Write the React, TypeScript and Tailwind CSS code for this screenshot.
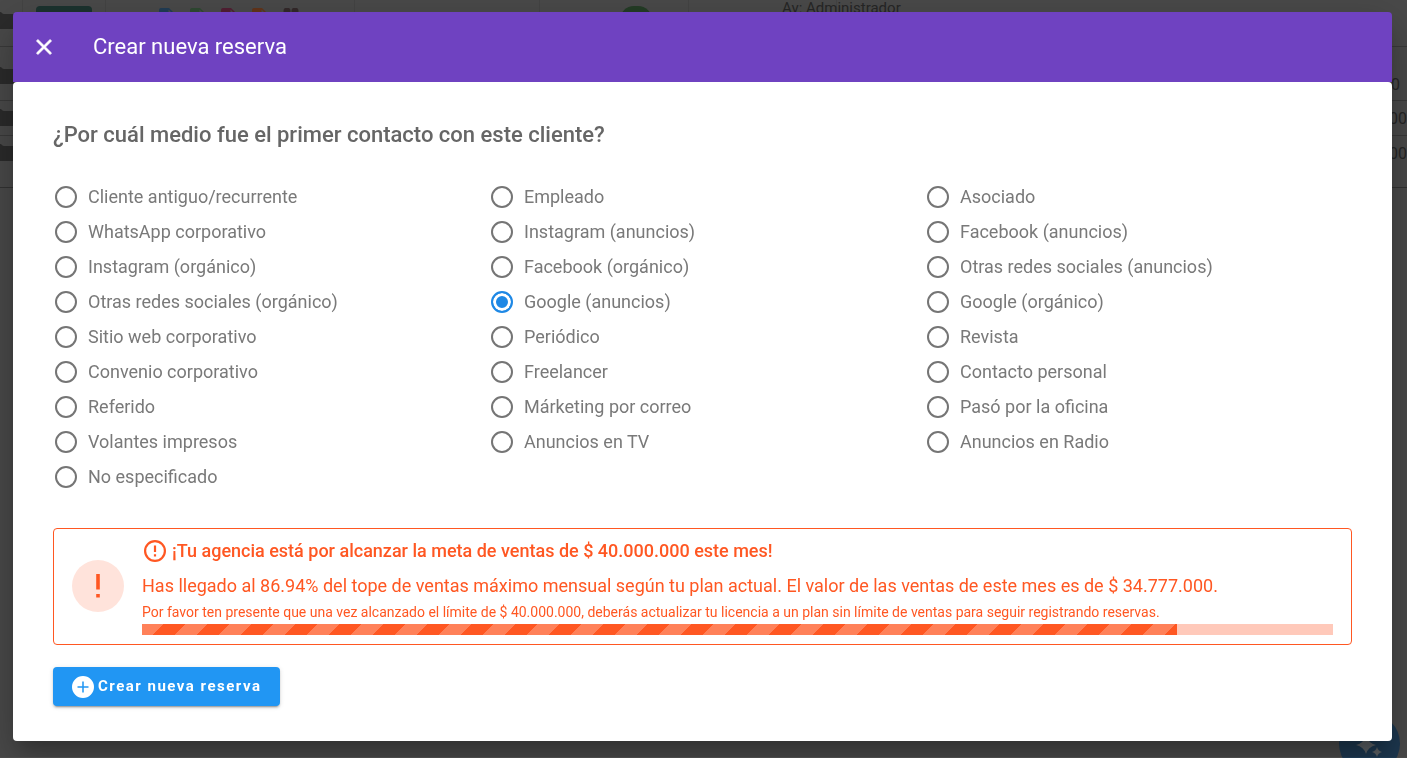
import React, { useState } from 'react';

const contactOptions = [
    'Cliente antiguo/recurrente',
    'Empleado',
    'Asociado',
    'WhatsApp corporativo',
    'Instagram (anuncios)',
    'Facebook (anuncios)',
    'Instagram (orgánico)',
    'Facebook (orgánico)',
    'Otras redes sociales (anuncios)',
    'Otras redes sociales (orgánico)',
    'Google (anuncios)',
    'Google (orgánico)',
    'Sitio web corporativo',
    'Periódico',
    'Revista',
    'Convenio corporativo',
    'Freelancer',
    'Contacto personal',
    'Referido',
    'Márketing por correo',
    'Pasó por la oficina',
    'Volantes impresos',
    'Anuncios en TV',
    'Anuncios en Radio',
    'No especificado'
];

const salesPercent = 86.94;

function FileIcon({ className }: { className: string }) {
    return (
        <svg viewBox="0 0 16 20" className={`w-4 h-5 ${className}`} fill="currentColor" aria-hidden="true">
            <path d="M2 0h8l6 6v12a2 2 0 0 1-2 2H2a2 2 0 0 1-2-2V2a2 2 0 0 1 2-2z" />
            <path d="M9.500 1.500v5h5z" fill="#4a4a4a" />
        </svg>
    );
}

function SideTag() {
    return (
        <svg viewBox="0 0 16 17" className="w-4 h-[17px] shrink-0" fill="#2b2b2b" aria-hidden="true">
            <path d="M0 0c2 0 2 2 4 2h12v15H0z" />
        </svg>
    );
}

function BookingsPage() {
    return (
        <div className="fixed inset-0 overflow-hidden bg-[#4a4a4a] text-[#262626]" aria-hidden="true">
            <div className="flex h-[47px] border-b border-[#3a3a3a]">
                <div className="w-[23px] border-r border-[#444444] pt-3"><SideTag /></div>
                <div className="w-[83px] border-r border-[#444444] pt-[6px] pl-[13px]">
                    <div className="w-14 h-6 rounded-sm bg-[#1c332f]"></div>
                </div>
                <div className="w-[249px] border-r border-[#444444] flex gap-[15px] pt-2 pl-[53px]">
                    <FileIcon className="text-[#213d55]" />
                    <FileIcon className="text-[#2f4a32]" />
                    <FileIcon className="text-[#521f33]" />
                    <FileIcon className="text-[#63351a]" />
                    <svg viewBox="0 0 16 20" className="w-4 h-5" fill="#33292a" aria-hidden="true">
                        <circle cx="4" cy="3" r="3.500" />
                        <circle cx="12" cy="3" r="3.500" />
                    </svg>
                </div>
                <div className="w-[185px] border-r border-[#444444]"></div>
                <div className="w-[149px] border-r border-[#444444] pt-[6px] pl-20">
                    <div className="w-8 h-7 rounded-full bg-[#243d26]"></div>
                </div>
                <div className="w-[148px] border-r border-[#444444] pl-[93px] text-[15px] leading-4 whitespace-nowrap">
                    Av: Administrador
                </div>
            </div>
            <div className="flex justify-between h-[54px] border-b border-[#3a3a3a] pt-5">
                <SideTag />
                <span className="pt-2 pr-[7px] text-base leading-5">0</span>
            </div>
            <div className="flex justify-between h-[35px] border-b border-[#3a3a3a] pt-2">
                <SideTag />
                <span className="text-base leading-5">00</span>
            </div>
            <div className="flex justify-between h-[52px] border-b border-[#333333] pt-2">
                <SideTag />
                <span className="text-base leading-5">00</span>
            </div>
            <div className="absolute right-[7px] -bottom-4 w-[61px] h-[61px] rounded-full bg-[#1d3850]">
                <svg viewBox="0 0 61 61" fill="#5b6064" aria-hidden="true">
                    <path d="M27 22q2 8 10 10q-8 2-10 9q-2-7-10-9q8-2 10-10zM38 34q1 4 5 5q-4 1-5 5q-1-4-5-5q4-1 5-5z" />
                </svg>
            </div>
        </div>
    );
}

function ContactOptions() {
    const [selected, setSelected] = useState('Google (anuncios)');

    return (
        <fieldset>
            <legend className="text-[22px] leading-8 font-medium text-[#666666]">
                ¿Por cuál medio fue el primer contacto con este cliente?
            </legend>
            <div className="grid grid-cols-3 gap-x-[9px] mt-7">
                {contactOptions.map((option) => (
                    <label key={option} className="flex items-center h-[35px] pl-[2px] gap-[11px] text-lg text-[#797979] cursor-pointer">
                        <input
                            type="radio"
                            name="medio"
                            value={option}
                            checked={selected === option}
                            onChange={() => setSelected(option)}
                            className="appearance-none shrink-0 w-[22px] h-[22px] rounded-full border-2 border-[#757575] checked:border-[#1e88e5] checked:bg-[#1e88e5] checked:shadow-[inset_0_0_0_3px_white]"
                        />
                        {option}
                    </label>
                ))}
            </div>
        </fieldset>
    );
}

function SalesAlert() {
    return (
        <div role="alert" className="flex items-center gap-[18px] mt-[34px] px-[18px] pt-2 pb-[9px] rounded border border-[#ff5722] text-[#ff5722]">
            <div className="flex items-center justify-center shrink-0 w-[52px] h-[52px] rounded-full bg-[#ffe3db]">
                <svg viewBox="0 0 26 26" className="w-[26px] h-[26px]" fill="currentColor" aria-hidden="true">
                    <path d="M11.200 1h3.600v15.500h-3.600zM11.200 21h3.600v3.600h-3.600z" />
                </svg>
            </div>
            <div className="flex-1 min-w-0">
                <div className="flex items-center gap-[6px] h-[27px] pl-[2px] text-lg font-medium">
                    <svg viewBox="2 2 20 20" className="w-[22px] h-[22px] shrink-0" fill="currentColor" aria-hidden="true">
                        <path d="M11 15h2v2h-2zm0-8h2v6h-2zm1-5a10 10 0 1 0 0 20 10 10 0 0 0 0-20zm0 18a8 8 0 1 1 0-16 8 8 0 0 1 0 16z" />
                    </svg>
                    ¡Tu agencia está por alcanzar la meta de ventas de $ 40.000.000 este mes!
                </div>
                <p className="mt-2 text-lg leading-7">
                    Has llegado al 86.94% del tope de ventas máximo mensual según tu plan actual. El valor de las ventas de este mes es de $ 34.777.000.
                </p>
                <p className="text-sm leading-6">
                    Por favor ten presente que una vez alcanzado el límite de $ 40.000.000, deberás actualizar tu licencia a un plan sin límite de ventas para seguir registrando reservas.
                </p>
                <div className="h-[11px] bg-[#ffc9ba]">
                    <div
                        className="h-full bg-[#ff5722] bg-[linear-gradient(135deg,rgba(255,255,255,0.25)_25%,transparent_25%,transparent_50%,rgba(255,255,255,0.25)_50%,rgba(255,255,255,0.25)_75%,transparent_75%)] bg-[length:44px_44px]"
                        style={{ width: `${salesPercent}%` }}
                    ></div>
                </div>
            </div>
        </div>
    );
}

function App() {
    return (
        <div className="font-[Roboto,sans-serif]">
            <BookingsPage />
            <div className="relative pt-3 pb-4 pl-[13px] pr-[15px]">
                <main role="dialog" aria-label="Crear nueva reserva" className="rounded shadow-[0_11px_15px_-7px_rgba(0,0,0,0.2),0_24px_38px_3px_rgba(0,0,0,0.14),0_9px_46px_8px_rgba(0,0,0,0.12)]">
                    <header className="flex items-center h-[70px] pl-[18px] gap-9 rounded-t bg-[#6f42c1] text-white">
                        <button type="button" aria-label="Cerrar">
                            <svg viewBox="0 0 24 24" className="w-[26px] h-[26px]" fill="currentColor" stroke="currentColor" strokeWidth="0.600" aria-hidden="true">
                                <path d="M19 6.410 17.590 5 12 10.590 6.410 5 5 6.410 10.590 12 5 17.590 6.410 19 12 13.410 17.590 19 19 17.590 13.410 12z" />
                            </svg>
                        </button>
                        <h1 className="text-[22px] leading-8">Crear nueva reserva</h1>
                    </header>
                    <section className="px-10 pt-[37px] pb-[35px] rounded bg-white">
                        <ContactOptions />
                        <SalesAlert />
                        <button
                            type="button"
                            className="flex items-center gap-1 h-[39px] mt-[22px] px-[19px] rounded bg-[#2196f3] text-white text-[15px] font-bold tracking-widest shadow-[0_3px_1px_-2px_rgba(0,0,0,0.2),0_2px_2px_rgba(0,0,0,0.14),0_1px_5px_rgba(0,0,0,0.12)]"
                        >
                            <svg viewBox="2 2 20 20" className="w-[22px] h-[22px]" fill="currentColor" aria-hidden="true">
                                <path d="M17 12.700h-4.300V17h-1.400v-4.300H7v-1.400h4.300V7h1.400v4.300H17M12 2a10 10 0 1 0 0 20 10 10 0 0 0 0-20z" />
                            </svg>
                            Crear nueva reserva
                        </button>
                    </section>
                </main>
            </div>
        </div>
    );
}

export default App;
